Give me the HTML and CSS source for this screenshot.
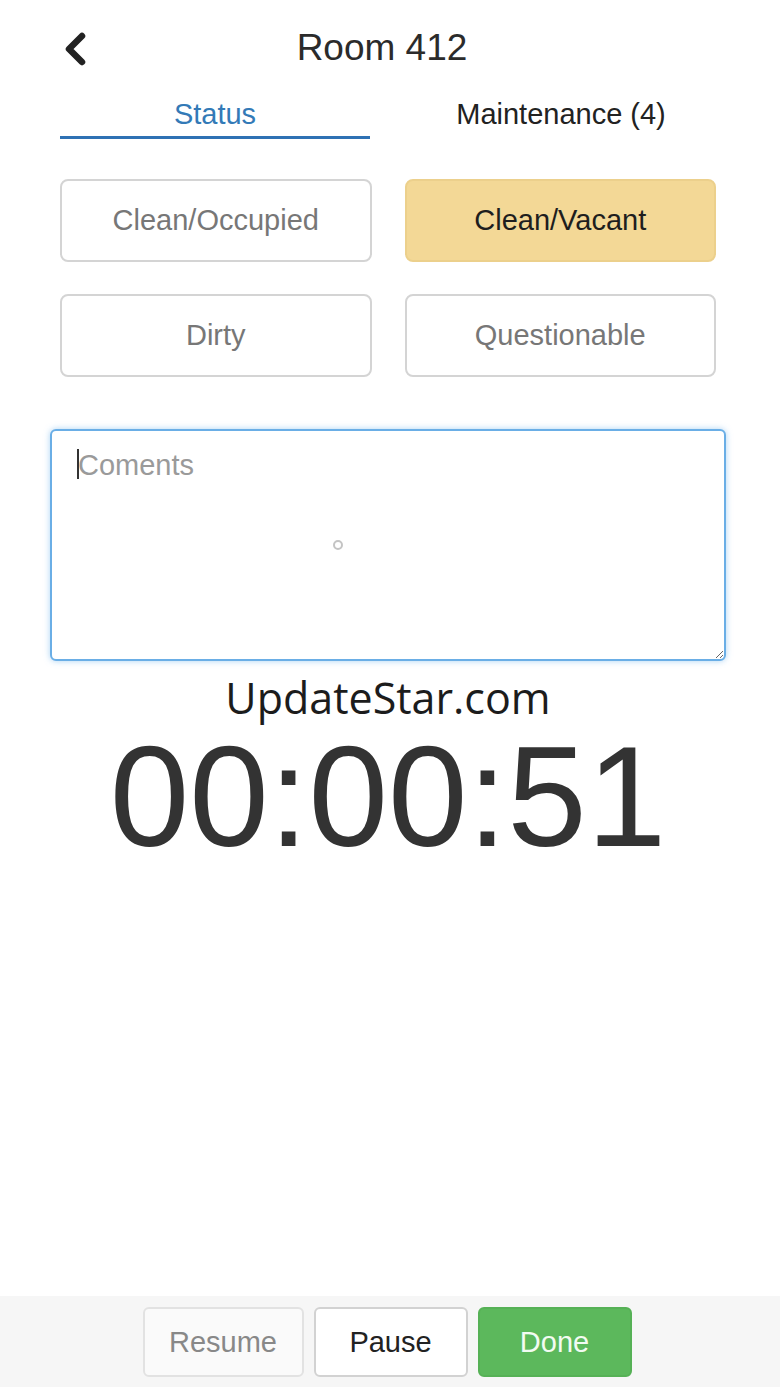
FILE: index.html
```html
<!DOCTYPE html>
<html lang="en">
<head>
    <meta charset="UTF-8">
    <meta name="viewport" content="width=device-width, initial-scale=1.0">
    <title>Room 412</title>
    <link rel="stylesheet" href="styles.css">
</head>
<body>
    <main class="page">
        <header class="top-bar">
            <button class="back-btn" aria-label="Back">
                <svg width="30" height="36" viewBox="0 0 30 36">
                    <polyline points="22,5 9,18 22,31" fill="none" stroke="#222" stroke-width="6.5" stroke-linecap="round" stroke-linejoin="round"/>
                </svg>
            </button>
            <h1>Room 412</h1>
        </header>

        <nav class="tabs">
            <div class="tab active">Status</div>
            <div class="tab">Maintenance (4)</div>
        </nav>

        <div class="status-grid">
            <button class="status-btn">Clean/Occupied</button>
            <button class="status-btn selected">Clean/Vacant</button>
            <button class="status-btn">Dirty</button>
            <button class="status-btn">Questionable</button>
        </div>

        <div class="comments-wrap">
            <textarea class="comments" placeholder="Coments"></textarea>
            <span class="caret"></span>
            <span class="touch-dot"></span>
        </div>

        <div class="watermark">UpdateStar.com</div>
        <div class="timer">00:00:51</div>
    </main>

    <footer class="actions">
        <button class="action-btn resume">Resume</button>
        <button class="action-btn pause">Pause</button>
        <button class="action-btn done">Done</button>
    </footer>
</body>
</html>
```

FILE: styles.css
```css
* {
    box-sizing: border-box;
}

body {
    margin: 0;
    height: 100vh;
    display: flex;
    flex-direction: column;
    font-family: "Liberation Sans", Arial, sans-serif;
    color: #222;
    background: #fff;
}

.page {
    flex: 1;
    padding: 0 64px 0 60px;
}

.top-bar {
    position: relative;
    height: 96px;
    display: flex;
    align-items: center;
    justify-content: center;
}

.back-btn {
    position: absolute;
    left: 0;
    top: 31px;
    padding: 0;
    border: none;
    background: none;
}

.top-bar h1 {
    margin: 0 12px 0 0;
    font-size: 37px;
    font-weight: normal;
    color: #2b2b2b;
}

.tabs {
    display: grid;
    grid-template-columns: 1fr 1fr;
    column-gap: 36px;
}

.tab {
    text-align: center;
    font-size: 29px;
    line-height: 36px;
    padding-bottom: 4px;
    color: #222;
    border-bottom: 3px solid transparent;
}

.tab.active {
    color: #337ab7;
    border-bottom-color: #2e71b4;
}

.status-grid {
    margin-top: 40px;
    display: grid;
    grid-template-columns: 1fr 1fr;
    column-gap: 33px;
    row-gap: 32px;
}

.status-btn {
    height: 83px;
    font-family: inherit;
    font-size: 29px;
    color: #777;
    background: #fff;
    border: 2px solid #d4d4d4;
    border-radius: 8px;
}

.status-btn.selected {
    background: #f3d896;
    border-color: #ecd08c;
    color: #1e1e1e;
}

.comments-wrap {
    position: relative;
    margin: 52px -10px 0 -10px;
}

.comments {
    display: block;
    width: 100%;
    height: 232px;
    padding: 18px 26px;
    font-family: inherit;
    font-size: 29px;
    line-height: 32px;
    border: 2px solid #6aaee6;
    border-radius: 6px;
    box-shadow: 0 0 6px rgba(102, 175, 233, 0.55);
    outline: none;
}

.comments::placeholder {
    color: #9a9a9a;
}

.caret {
    position: absolute;
    left: 27px;
    top: 20px;
    width: 2px;
    height: 30px;
    background: #333;
}

.touch-dot {
    position: absolute;
    left: 283px;
    top: 111px;
    width: 10px;
    height: 10px;
    border: 2px solid #c4c4c4;
    border-radius: 50%;
}

.watermark {
    margin-top: 14px;
    text-align: center;
    font-family: "Open Sans", "Noto Sans", sans-serif;
    font-size: 43px;
    line-height: 46px;
    color: #1c1c1c;
}

.timer {
    margin-top: 11px;
    text-align: center;
    font-size: 143px;
    line-height: 130px;
    color: #333;
}

.actions {
    height: 91px;
    padding: 11px 6px 0 0;
    display: flex;
    justify-content: center;
    gap: 10px;
    background: #f6f6f6;
}

.action-btn {
    width: 154px;
    height: 70px;
    font-family: inherit;
    font-size: 29px;
    border: 2px solid #d2d2d2;
    border-radius: 6px;
    background: #fff;
    color: #222;
}

.action-btn.resume {
    width: 161px;
    background: #fafafa;
    border-color: #e2e2e2;
    color: #888;
}

.action-btn.done {
    background: #5cb85c;
    border-color: #56b156;
    color: #f2fbf2;
}
```
